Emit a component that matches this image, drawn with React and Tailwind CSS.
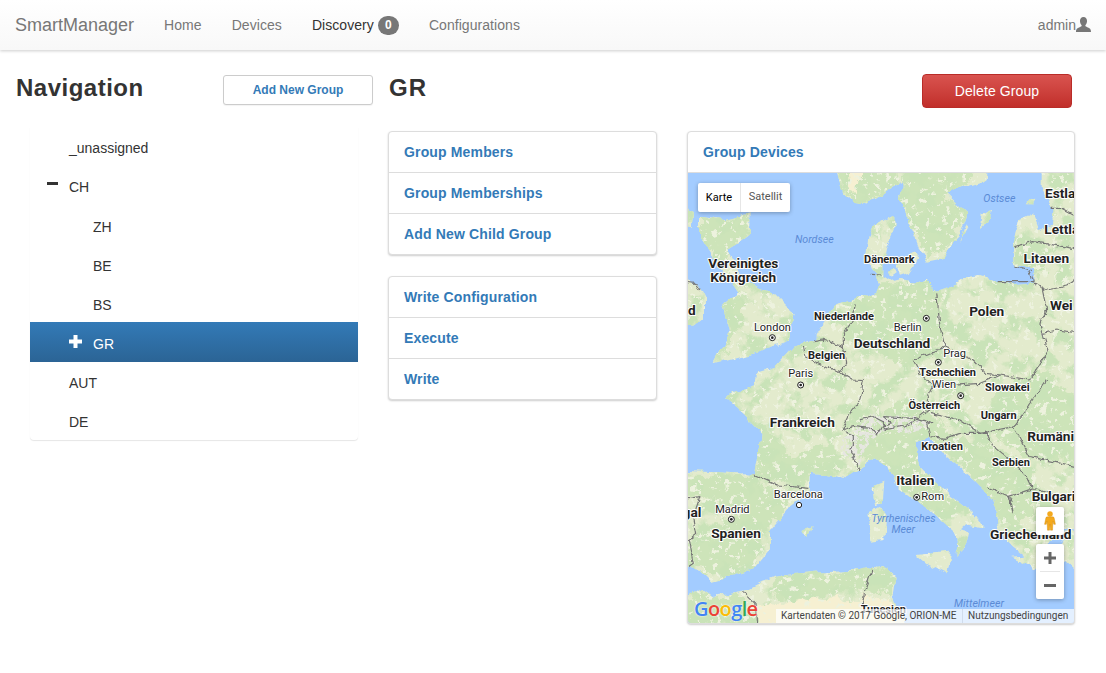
const treeRows = [
  { label: '_unassigned', pad: 'pl-[39px] pt-[4px]' },
  { label: 'CH', pad: 'pl-[39px] pt-[4px]', icon: 'minus' },
  { label: 'ZH', pad: 'pl-[63px] pt-[6px]' },
  { label: 'BE', pad: 'pl-[63px] pt-[6px]' },
  { label: 'BS', pad: 'pl-[63px] pt-[6px]' },
  { label: 'GR', pad: 'pl-[63px] pt-[4px]', icon: 'plus', selected: true },
  { label: 'AUT', pad: 'pl-[39px] pt-[4px]' },
  { label: 'DE', pad: 'pl-[39px] pt-[4px]' },
];

// map coordinates are 3x page px, origin at page (680,170)
const OFF = 690;
const europe =
  `M1210,${OFF + 380} L1130,${OFF + 390} L1110,${OFF + 430} L1100,${OFF + 490} L1060,${OFF + 520} L1040,${OFF + 470} L1000,${OFF + 440} L960,${OFF + 400} L950,${OFF + 340} L935,${OFF + 295} L880,${OFF + 240} L800,${OFF + 170} L745,${OFF + 112} L705,${OFF + 122} L705,${OFF + 150} L720,${OFF + 200} L790,${OFF + 270} L830,${OFF + 300} L880,${OFF + 340} L912,${OFF + 380} L855,${OFF + 370} L840,${OFF + 385} L868,${OFF + 395} L860,${OFF + 430} L825,${OFF + 465} L835,${OFF + 430} L825,${OFF + 395} L770,${OFF + 345} L700,${OFF + 300} L650,${OFF + 260} L625,${OFF + 195} L580,${OFF + 178} L500,${OFF + 235} L440,${OFF + 225} L390,${OFF + 222} L385,${OFF + 280} L330,${OFF + 320} L270,${OFF + 390} L270,${OFF + 450} L220,${OFF + 510} L180,${OFF + 520} L95,${OFF + 545} L60,${OFF + 510} L0,${OFF + 498} L0,${OFF + 212} L225,${OFF + 222} L235,${OFF + 170} L245,${OFF + 100} L190,${OFF + 40} L135,${OFF - 5} L220,645 L225,610 L285,590 L340,530 L370,520 L410,510 L410,490 L440,440 L470,400 L530,385 L590,365 L600,340 L580,300 L560,250 L565,200 L580,170 L620,150 L640,140 L640,190 L620,230 L610,280 L610,315 L640,335 L660,330 L710,338 L740,330 L770,365 L800,355 L870,320 L900,315 L950,330 L1000,340 L1060,335 L1060,300 L1000,285 L1000,220 L1020,150 L1060,130 L1080,180 L1110,170 L1115,110 L1085,60 L1085,-10 L1210,-10 Z`;

const landBits = [
  '690,-10 925,-10 915,32 860,50 800,70 830,100 862,130 840,195 820,215 790,265 740,275 720,240 700,190 680,140 660,80 670,40',
  '460,-10 680,-10 680,30 650,45 620,60 560,100 520,95 480,60',
  '900,180 905,130 935,120 925,160',
  '840,220 860,160 865,170',
  '1040,100 1050,85 1072,80 1065,100',
  '650,280 700,240 715,270 690,310 660,320',
  '625,300 645,290 650,310 635,320',
  '0,300 50,340 75,390 75,440 40,470 0,465',
  '0,110 40,130 35,175 0,170',
  `575,${OFF + 260} 610,${OFF + 245} 605,${OFF + 310} 585,${OFF + 315}`,
  `565,${OFF + 340} 600,${OFF + 320} 615,${OFF + 350} 610,${OFF + 420} 575,${OFF + 425}`,
  `710,${OFF + 465} 810,${OFF + 455} 800,${OFF + 520} 740,${OFF + 490}`,
  `362,${OFF + 392} 395,${OFF + 382} 385,${OFF + 408}`,
  `1000,${OFF + 470} 1060,${OFF + 465} 1050,${OFF + 495}`,
  `1140,${OFF + 395} 1210,${OFF + 380} 1210,${OFF + 530} 1155,${OFF + 480}`,
];

const britain =
  'M60,140 L130,150 L215,130 L212,190 L170,222 L140,240 L170,285 L190,340 L280,370 L340,430 L330,510 L250,540 L100,580 L150,490 L130,400 L170,370 L120,295 L90,250 L60,200 Z';

const africa = `M0,${OFF + 610} L60,${OFF + 560} L100,${OFF + 590} L190,${OFF + 575} L280,${OFF + 530} L400,${OFF + 515} L520,${OFF + 510} L570,${OFF + 500} L610,${OFF + 495} L650,${OFF + 530} L640,${OFF + 590} L660,${OFF + 640} L680,${OFF + 690} L0,${OFF + 690} Z`;

const greens = [
  '500,380 600,340 770,340 790,500 720,580 620,560 490,500',
  '670,40 700,-10 900,-10 850,60 800,75 860,130 820,215 740,270 690,170',
  '460,-10 640,-10 650,45 560,100 510,95',
  '1000,225 1060,215 1115,240 1095,300 1060,330 1010,285',
  '60,140 130,150 215,130 210,190 170,222 120,295 90,250 60,200',
  '130,400 170,370 190,410 180,480 100,575 150,490',
  `230,${OFF + 60} 245,${OFF + 100} 232,${OFF + 220} 385,${OFF + 260} 385,${OFF + 225} 440,${OFF + 225} 490,${OFF + 170} 440,${OFF + 130} 340,${OFF + 170}`,
  `0,${OFF + 225} 210,${OFF + 235} 290,${OFF + 270} 330,${OFF + 320} 250,${OFF + 400} 220,${OFF + 500} 120,${OFF + 535} 60,${OFF + 500} 0,${OFF + 490} 50,${OFF + 400} 170,${OFF + 340} 90,${OFF + 290} 0,${OFF + 290}`,
  `520,${OFF + 100} 700,${OFF - 20} 820,${OFF + 100} 720,${OFF + 210} 830,${OFF + 305} 880,${OFF + 345} 770,${OFF + 335} 690,${OFF + 290} 640,${OFF + 220} 540,${OFF + 180}`,
  `760,${OFF + 110} 920,${OFF + 130} 1050,${OFF + 210} 1080,${OFF + 300} 1000,${OFF + 400} 950,${OFF + 340} 860,${OFF + 215}`,
  `280,${OFF + 535} 400,${OFF + 518} 520,${OFF + 512} 610,${OFF + 497} 648,${OFF + 530} 640,${OFF + 580} 500,${OFF + 570} 380,${OFF + 590} 290,${OFF + 590}`,
  `0,${OFF + 612} 60,${OFF + 562} 100,${OFF + 592} 190,${OFF + 577} 200,${OFF + 620} 120,${OFF + 640} 0,${OFF + 660}`,
  `940,${OFF - 20} 1070,${OFF - 100} 1210,${OFF + 10} 1210,${OFF + 190} 1040,${OFF + 170} 930,${OFF + 90}`,
];

const sand = [
  `220,${OFF + 625} 400,${OFF + 595} 520,${OFF + 590} 640,${OFF + 595} 660,${OFF + 640} 680,${OFF + 690} 230,${OFF + 690}`,
  '500,-10 540,-10 530,70 505,60',
];

const snow = [
  `480,${OFF + 130} 570,${OFF + 40} 700,${OFF + 50} 760,${OFF + 80} 680,${OFF + 95} 620,${OFF + 90} 560,${OFF + 130} 540,${OFF + 190} 490,${OFF + 170}`,
];

const borders = [
  '575,310 605,312',
  '525,400 520,450 490,490 490,530 430,510 400,515',
  '490,530 500,580 480,605',
  `370,525 375,560 440,590 480,605 520,630 550,632 540,${OFF} 515,${OFF + 30} 485,${OFF + 90} 520,${OFF + 105} 520,${OFF + 140} 510,${OFF + 150} 530,${OFF + 190} 540,${OFF + 210}`,
  '770,370 775,420 780,470 795,530',
  '795,530 700,570 720,610 760,650 745,680',
  '795,530 880,570 920,610 960,615 1050,630 1105,545 1080,460 1100,420 1085,350 1060,335 950,335',
  '1000,285 1050,300 1060,335',
  '1000,230 1060,215 1210,240',
  '1115,115 1145,115 1210,150',
  '1090,360 1160,345 1210,310',
  '1090,490 1130,480 1210,490',
  '760,650 900,640 960,615',
  `540,${OFF + 60} 580,${OFF + 50} 610,${OFF + 65} 610,${OFF + 90} 665,${OFF + 80} 690,${OFF + 70} 720,${OFF + 50} 745,${OFF + 30} 745,${OFF - 10}`,
  `485,${OFF + 90} 520,${OFF + 80} 575,${OFF + 85} 590,${OFF + 105} 605,${OFF + 80} 635,${OFF + 70} 610,${OFF + 50}`,
  `610,${OFF + 50} 700,${OFF + 55} 750,${OFF + 70} 760,${OFF + 65}`,
  `740,${OFF + 70} 750,${OFF + 110} 795,${OFF + 115} 840,${OFF + 100}`,
  `750,${OFF + 40} 840,${OFF + 60} 900,${OFF + 100} 1000,${OFF + 80} 1060,${OFF} 1100,${OFF - 60}`,
  `1000,${OFF + 80} 1050,${OFF + 170} 1210,${OFF + 205}`,
  `840,${OFF + 100} 920,${OFF + 100} 940,${OFF + 140} 1000,${OFF + 190} 1040,${OFF + 230} 1060,${OFF + 270}`,
  `222,${OFF + 225} 290,${OFF + 255} 385,${OFF + 265}`,
  `0,${OFF + 300} 60,${OFF + 290} 40,${OFF + 350} 50,${OFF + 400} 25,${OFF + 420} 40,${OFF + 490} 25,${OFF + 500}`,
  `920,${OFF + 260} 990,${OFF + 290} 1000,${OFF + 340} 985,${OFF + 290} 1060,${OFF + 265} 1170,${OFF + 300}`,
  `575,${OFF + 510} 555,${OFF + 570} 545,${OFF + 625}`,
  `190,${OFF + 575} 225,${OFF + 610} 230,${OFF + 669}`,
  '0,335 45,340 60,360',
];

const bigLabels = [
  ['Estla', 1095, 85, 'start'], ['Lettla', 1093, 193, 'start'], ['Litauen', 1099, 280, 'middle'],
  ['Vereinigtes', 190, 295, 'middle'], ['Königreich', 190, 335, 'middle'], ['d', 24, 435, 'start'],
  ['Wei', 1110, 420, 'start'], ['Polen', 920, 437, 'middle'], ['Deutschland', 636, 533, 'middle'],
  ['Frankreich', 367, OFF + 80, 'middle'], ['Rumäni', 1042, OFF + 122, 'start'], ['Italien', 706, OFF + 255, 'middle'],
  ['Bulgari', 1055, OFF + 302, 'start'], ['gal', 64, OFF + 352, 'end'], ['Spanien', 168, OFF + 413, 'middle'],
  ['Griechenland', 930, OFF + 416, 'start'],
];

const smallBold = [
  ['Dänemark', 628, 280], ['Niederlande', 492, 450], ['Belgien', 440, 566], ['Tschechien', 803, 619],
  ['Slowakei', 982, 662], ['Österreich', 763, OFF + 28], ['Ungarn', 956, OFF + 58], ['Kroatien', 786, OFF + 150],
  ['Serbien', 993, OFF + 198], ['Tunesien', 610, OFF + 640],
];

const cities = [
  ['London', 277, 482, 'middle'], ['Berlin', 683, 484, 'middle'], ['Prag', 824, 560, 'middle'], ['Wien', 792, 655, 'middle'],
  ['Paris', 362, 622, 'middle'], ['Barcelona', 355, OFF + 295, 'middle'], ['Rom', 724, OFF + 300, 'start'], ['Madrid', 157, OFF + 340, 'middle'],
];

const dots = [[277, 503], [739, 445], [775, 577], [842, 677], [362, 645], [710, OFF + 292], [154, OFF + 358]];

const seas = [
  ['Ostsee', 958, 96], ['Nordsee', 403, 220], ['Tyrrhenisches', 670, OFF + 367], ['Meer', 670, OFF + 400], ['Mittelmeer', 897, OFF + 622],
];

function MapDrawing() {
  const halo = { stroke: '#ffffff', strokeWidth: 6, strokeLinejoin: 'round', paintOrder: 'stroke' };
  return (
    <svg viewBox="24 9 1158 1350" className="block w-[386px] h-[450px] bg-[#a3ccff]">
      <defs>
        <clipPath id="land">
          <path d={europe} />
          <path d={britain} />
          <path d={africa} />
          {landBits.map((p, i) => <polygon key={i} points={p} />)}
        </clipPath>
        <filter id="coast" x="-5%" y="-5%" width="110%" height="110%" colorInterpolationFilters="sRGB">
          <feTurbulence type="fractalNoise" baseFrequency="0.022" numOctaves="4" seed="4" />
          <feDisplacementMap in="SourceGraphic" scale="26" xChannelSelector="R" yChannelSelector="G" />
        </filter>
        <filter id="wiggle" x="-5%" y="-5%" width="110%" height="110%" colorInterpolationFilters="sRGB">
          <feTurbulence type="fractalNoise" baseFrequency="0.05" numOctaves="3" seed="9" />
          <feDisplacementMap in="SourceGraphic" scale="16" xChannelSelector="R" yChannelSelector="G" />
        </filter>
        <filter id="soft" x="-10%" y="-10%" width="120%" height="120%" colorInterpolationFilters="sRGB">
          <feGaussianBlur stdDeviation="6" />
          <feTurbulence type="fractalNoise" baseFrequency="0.03" numOctaves="4" seed="2" result="n" />
          <feDisplacementMap in="SourceGraphic" in2="n" scale="50" xChannelSelector="R" yChannelSelector="G" />
        </filter>
        <filter id="mottleGreen" x="0" y="0" width="100%" height="100%" colorInterpolationFilters="sRGB">
          <feTurbulence type="fractalNoise" baseFrequency="0.016" numOctaves="4" seed="7" />
          <feColorMatrix type="matrix" values="0 0 0 0 0.79  0 0 0 0 0.89  0 0 0 0 0.72  7 0 0 0 -3.3" />
        </filter>
        <filter id="mottleLight" x="0" y="0" width="100%" height="100%" colorInterpolationFilters="sRGB">
          <feTurbulence type="fractalNoise" baseFrequency="0.06" numOctaves="3" seed="12" />
          <feColorMatrix type="matrix" values="0 0 0 0 0.93  0 0 0 0 0.95  0 0 0 0 0.87  12 0 0 0 -7.4" />
        </filter>
        <filter id="speck" x="0" y="0" width="100%" height="100%" colorInterpolationFilters="sRGB">
          <feTurbulence type="fractalNoise" baseFrequency="0.09" numOctaves="2" seed="5" />
          <feColorMatrix type="matrix" values="0 0 0 0 0.9  0 0 0 0 0.9  0 0 0 0 0.88  14 0 0 0 -6.4" result="n" />
          <feComposite in="n" in2="SourceGraphic" operator="in" />
        </filter>
      </defs>
      <g filter="url(#coast)">
        <g clipPath="url(#land)">
          <rect x="-20" y="-20" width="1260" height="1420" fill="#e3ebcd" />
          <g fill="#cde4b9" filter="url(#soft)">
            {greens.map((p, i) => <polygon key={i} points={p} />)}
          </g>
          <rect x="-20" y="-20" width="1260" height="1420" filter="url(#mottleGreen)" />
          <g fill="#f6f0d2" filter="url(#soft)">
            {sand.map((p, i) => <polygon key={i} points={p} />)}
          </g>
          <rect x="-20" y="-20" width="1260" height="1420" filter="url(#mottleLight)" />
          <g fill="#888" filter="url(#speck)">
            {snow.map((p, i) => <polygon key={i} points={p} />)}
          </g>
        </g>
      </g>
      <g fill="none" stroke="#767676" strokeWidth="3.500" strokeLinejoin="round" filter="url(#wiggle)">
        {borders.map((p, i) => <polyline key={i} points={p} />)}
      </g>
      {dots.map(([x, y], i) => (
        <g key={i}>
          <circle cx={x} cy={y} r="9" fill="#fff" stroke="#222" strokeWidth="3" />
          <circle cx={x} cy={y} r="4" fill="#222" />
        </g>
      ))}
      <circle cx="357" cy={OFF + 315} r="8" fill="#fff" stroke="#222" strokeWidth="3" />
      <g fontFamily="Roboto, sans-serif" fill="#222">
        {bigLabels.map(([t, x, y, a]) => (
          <text key={t} x={x} y={y} textAnchor={a} fontSize="41" fontWeight="700" {...halo}>{t}</text>
        ))}
        {smallBold.map(([t, x, y]) => (
          <text key={t} x={x} y={y} textAnchor="middle" fontSize="33" fontWeight="700" {...halo}>{t}</text>
        ))}
        {cities.map(([t, x, y, a]) => (
          <text key={t} x={x} y={y} textAnchor={a} fontSize="33" {...halo}>{t}</text>
        ))}
        {seas.map(([t, x, y]) => (
          <text key={t} x={x} y={y} textAnchor="middle" fontSize="32" fontStyle="italic" fill="#5b8bd6">{t}</text>
        ))}
      </g>
    </svg>
  );
}

function Plus() {
  return (
    <svg viewBox="0 0 13 13" className="w-[13px] h-[13px] text-white" fill="currentColor">
      <path d="M4.5 0h4v4.5H13v4H8.500V13h-4V8.500H0v-4h4.500z" />
    </svg>
  );
}

function Minus() {
  return (
    <svg viewBox="0 0 11 3" className="w-[11px] h-[3px]" fill="#333">
      <rect width="11" height="3" />
    </svg>
  );
}

function LinkPanel({ items }) {
  return (
    <div className="border border-[#ddd] rounded bg-white shadow-[0_1px_2px_rgba(0,0,0,0.2)]">
      {items.map((item, i) => (
        <div key={item} className={`pl-[15px] flex items-center text-[14px] font-bold tracking-[0.15px] text-[#337ab7] ${i > 0 ? 'h-[41px] border-t border-[#ddd]' : 'h-[40px]'}`}>
          {item}
        </div>
      ))}
    </div>
  );
}

export default function App() {
  return (
    <div className="min-h-[673px] bg-white text-[14px] text-[#333] font-['Liberation_Sans',Arial,sans-serif]">
      <nav className="h-[50px] flex items-center justify-between px-[15px] bg-gradient-to-b from-white to-[#f8f8f8] shadow-[0_1px_3px_rgba(0,0,0,0.2)]">
        <div className="flex items-center text-[#777] tracking-[0.06px]">
          <span className="text-[18px] mr-[15px] tracking-normal">SmartManager</span>
          <span className="px-[15px]">Home</span>
          <span className="px-[15px]">Devices</span>
          <span className="px-[15px] text-[#333] flex items-center">
            Discovery
            <span className="ml-[4px] h-[19px] w-[21px] rounded-[10px] bg-[#777] text-white text-[12px] font-bold flex items-center justify-center">0</span>
          </span>
          <span className="px-[15px]">Configurations</span>
        </div>
        <div className="flex items-center text-[#777]">
          admin
          <svg viewBox="0 0 14 14" className="w-[15px] h-[15px] mb-[1px]" fill="#777">
            <path d="M7 0C9.200 0 10.300 1.700 10.300 3.800C10.300 5.600 9.500 7 8.700 7.800C8.700 8.800 9.300 9 11 9.800C12.800 10.600 14 11 14 14H0C0 11 1.200 10.600 3 9.800C4.700 9 5.300 8.800 5.300 7.800C4.500 7 3.700 5.600 3.700 3.800C3.700 1.700 4.800 0 7 0Z" />
          </svg>
        </div>
      </nav>

      <main className="flex pl-[15px] pt-[24px]">
        <section className="w-[358px]">
          <div className="h-[34px] flex justify-between">
            <h3 className="pl-px text-[24px] leading-[28px] font-bold tracking-[0.5px]">Navigation</h3>
            <button className="mt-[1px] w-[150px] h-[30px] rounded-[3px] border border-[#ccc] bg-white text-[12px] font-bold text-[#337ab7] shadow-[0_1px_1px_rgba(0,0,0,0.05)]">
              Add New Group
            </button>
          </div>
          <div className="mt-[18.5px] mx-[15px] rounded-b shadow-[0_1px_1px_rgba(0,0,0,0.1)]">
            {treeRows.map((row) => (
              <div key={row.label} className={`relative h-[39.2px] flex items-center ${row.pad} ${row.selected ? 'bg-gradient-to-b from-[#337ab7] to-[#2b6495] text-white' : ''}`}>
                {row.icon === 'plus' && <span className="absolute left-[39px] top-[13px]"><Plus /></span>}
                {row.icon === 'minus' && <span className="absolute left-[17px] top-[16px]"><Minus /></span>}
                {row.label}
              </div>
            ))}
          </div>
        </section>

        <section className="ml-[15px] w-[687px]">
          <div className="h-[34px] w-[684px] flex justify-between">
            <h3 className="pl-px text-[24px] leading-[28px] font-bold tracking-[1px]">GR</h3>
            <button className="w-[150px] h-[34px] rounded border border-[#b92c28] bg-gradient-to-b from-[#d9534f] to-[#c12e2a] text-white tracking-[0.1px]">
              Delete Group
            </button>
          </div>
          <div className="mt-[23px] flex items-start gap-[30px]">
            <div className="w-[269px] flex flex-col gap-[21px]">
              <LinkPanel items={['Group Members', 'Group Memberships', 'Add New Child Group']} />
              <LinkPanel items={['Write Configuration', 'Execute', 'Write']} />
            </div>
            <div className="w-[388px] border border-[#ddd] rounded bg-white shadow-[0_1px_2px_rgba(0,0,0,0.2)] overflow-hidden">
              <div className="h-[41px] pl-[15px] flex items-center font-bold tracking-[0.15px] text-[#337ab7] border-b border-[#ddd]">
                Group Devices
              </div>
              <div className="relative h-[450px] overflow-hidden font-['Roboto',sans-serif]">
                <MapDrawing />
                <div className="absolute left-[10px] top-[10px] h-[29px] flex items-center bg-white rounded-[2px] text-[11px] shadow-[0_1px_4px_rgba(0,0,0,0.3)]">
                  <span className="w-[43px] text-center text-black border-r border-[#e6e6e6] leading-[29px]">Karte</span>
                  <span className="w-[49px] text-center text-[#565656]">Satellit</span>
                </div>
                <div className="absolute right-[10px] top-[334px] w-[28px] h-[28px] bg-white rounded-[2px] flex items-center justify-center shadow-[0_1px_4px_rgba(0,0,0,0.3)]">
                  <svg viewBox="0 0 14 24" className="w-[12px] h-[20px]">
                    <circle cx="7" cy="3.500" r="3.300" fill="#f4a91c" />
                    <path d="M2 8.500Q2 7 4 7h6q2 0 2 1.500L13.500 16h-2L10.500 12 10 23H7.600L7 16l-.6 7H4L3.500 12 2.500 16h-2z" fill="#f4a91c" stroke="#d28a0c" strokeWidth=".5" />
                  </svg>
                </div>
                <div className="absolute right-[10px] top-[371px] w-[28px] h-[55px] bg-white rounded-[2px] flex flex-col items-center shadow-[0_1px_4px_rgba(0,0,0,0.3)]">
                  <svg viewBox="0 0 28 27" className="w-[28px] h-[27px]" fill="#666">
                    <path d="M12.500 8h3v4.500H20v3h-4.500V20h-3v-4.500H8v-3h4.500z" />
                  </svg>
                  <div className="w-[20px] h-px bg-[#e6e6e6]" />
                  <svg viewBox="0 0 28 27" className="w-[28px] h-[27px]" fill="#666">
                    <rect x="8" y="12" width="12" height="3" />
                  </svg>
                </div>
                <div className="absolute left-[6px] bottom-[2px] text-[20px] leading-[24px] font-semibold tracking-[-0.6px] font-['Open_Sans',sans-serif] [text-shadow:0_0_2px_#fff]">
                  <span className="text-[#4285f4]">G</span>
                  <span className="text-[#ea4335]">o</span>
                  <span className="text-[#fbbc05]">o</span>
                  <span className="text-[#4285f4]">g</span>
                  <span className="text-[#34a853]">l</span>
                  <span className="text-[#ea4335]">e</span>
                </div>
                <div className="absolute right-0 bottom-0 w-[298px] h-[14px] flex items-center bg-white/70 text-[10px] text-[#444] leading-[14px]">
                  <span className="w-[187px] pl-[5px] whitespace-nowrap border-r border-[#d0dcec]">Kartendaten © 2017 Google, ORION-ME</span>
                  <span className="pl-[5px] whitespace-nowrap">Nutzungsbedingungen</span>
                </div>
              </div>
            </div>
          </div>
        </section>
      </main>
    </div>
  );
}
